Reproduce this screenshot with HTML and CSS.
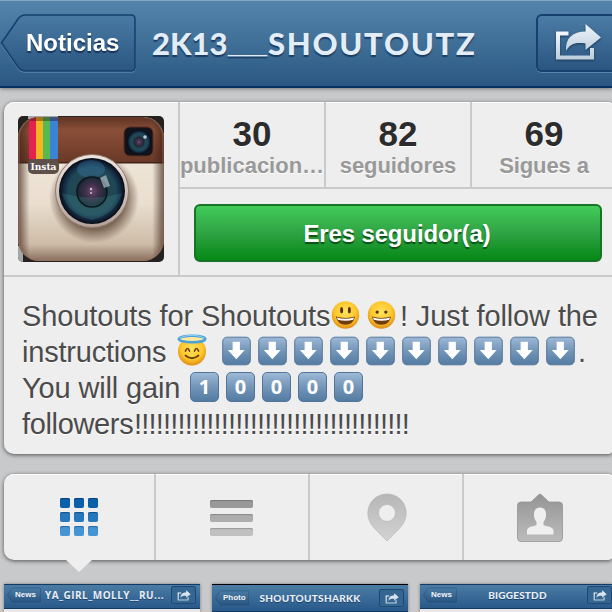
FILE: index.html
```html
<!DOCTYPE html>
<html lang="es">
<head>
<meta charset="utf-8">
<title>2K13__SHOUTOUTZ</title>
<link rel="stylesheet" href="styles.css">
</head>
<body>
<svg class="defs" aria-hidden="true">
  <defs>
    <linearGradient id="btn" x2="0" y2="1"><stop stop-color="#4a7ba5"/><stop offset="1" stop-color="#2a5680"/></linearGradient>
    <linearGradient id="silver" x2="0" y2="1"><stop stop-color="#f0f6fb"/><stop offset="1" stop-color="#bfcfde"/></linearGradient>
    <linearGradient id="key" x2="0" y2="1"><stop stop-color="#9db9d6"/><stop offset=".5" stop-color="#7395b8"/><stop offset="1" stop-color="#547ba2"/></linearGradient>
    <radialGradient id="face" cy=".4" r=".6"><stop stop-color="#ffe45e"/><stop offset=".65" stop-color="#fdc62b"/><stop offset="1" stop-color="#df8c13"/></radialGradient>
    <symbol id="back" viewBox="0 0 136 58"><path d="M1.500 29 18 5Q21 1 25 1H131Q135 1 135 5V53Q135 57 131 57H25Q21 57 18 53Z" fill="url(#btn)" stroke="#16406e" stroke-width="1.600"/></symbol>
    <symbol id="share" viewBox="0 0 48 38"><path d="M14.500 10.500H4V34.500H38V25" fill="none" stroke="url(#silver)" stroke-width="4"/><path d="M31.500 1 47 14.500 31.500 27V20.500C21 19 16 21 12 28 11 15 19 8.500 31.500 8.500Z" fill="url(#silver)"/></symbol>
    <symbol id="down" viewBox="0 0 30 30"><rect x=".7" y=".7" width="28.600" height="28.600" rx="4.500" fill="url(#key)" stroke="#52749a"/><path d="M11 5.500H18.500V14H23.500L14.800 23.500 6 14H11Z" fill="#fff"/></symbol>
    <symbol id="smile" viewBox="0 0 30 30"><circle cx="15" cy="15" r="14.200" fill="url(#face)"/><ellipse cx="11" cy="10" rx="1.500" ry="3.300" fill="#593310"/><ellipse cx="19" cy="10" rx="1.500" ry="3.300" fill="#593310"/><path d="M5 16.500Q15 19.500 25 16.500 23 25 15 25 7 25 5 16.500Z" fill="#713b12"/><path d="M6 17.500Q15 20 24 17.500L23 20Q15 22 7 20Z" fill="#fff"/></symbol>
    <symbol id="grin" viewBox="0 0 30 30"><circle cx="15" cy="15" r="14.200" fill="url(#face)"/><circle cx="10.500" cy="12" r="1.700" fill="#593310"/><circle cx="19.500" cy="12" r="1.700" fill="#593310"/><path d="M5 16.500Q15 19.500 25 16.500 23 25 15 25 7 25 5 16.500Z" fill="#713b12"/><path d="M6 17.500Q15 20 24 17.500L23 20Q15 22 7 20Z" fill="#fff"/></symbol>
    <symbol id="angel" viewBox="0 0 30 32"><circle cx="15" cy="17.500" r="14" fill="url(#face)"/><ellipse cx="15" cy="5" rx="13.200" ry="3.300" fill="#ffe9a0" stroke="#4aa2d9" stroke-width="2.600"/><path d="M2.500 4Q15-1.500 27.500 4" fill="none" stroke="#8fd2f2"/><path d="M8.500 17q2-5 4 0M17.500 17q2-5 4 0M8.500 21.500Q15 27 21.500 21.500" fill="none" stroke="#66400f" stroke-width="1.700" stroke-linecap="round"/></symbol>
  </defs>
</svg>

<header class="navbar">
  <a class="back"><svg class="back-shape"><use href="#back"/></svg><span class="back-label">Noticias</span></a>
  <h1 class="title"><span class="t1">2K13</span><span class="t2">__</span><span class="t3">SHOUTOUTZ</span></h1>
  <a class="share-btn"><svg class="share-icon"><use href="#share"/></svg></a>
</header>

<main>
  <section class="card profile">
    <div class="summary">
      <div class="avatar-cell">
        <svg class="avatar" viewBox="0 0 146 146">
          <defs>
            <linearGradient id="leather" x2="0" y2="1"><stop stop-color="#5b3022"/><stop offset=".3" stop-color="#8a4f38"/><stop offset="1" stop-color="#6a3827"/></linearGradient>
            <linearGradient id="body" x2="0" y2="1"><stop stop-color="#f4ece0"/><stop offset=".6" stop-color="#e9decf"/><stop offset=".88" stop-color="#cdbba6"/><stop offset="1" stop-color="#84695a"/></linearGradient>
            <linearGradient id="sides"><stop stop-color="#3a1f14" stop-opacity=".7"/><stop offset=".08" stop-color="#3a1f14" stop-opacity="0"/><stop offset=".92" stop-color="#3a1f14" stop-opacity="0"/><stop offset="1" stop-color="#3a1f14" stop-opacity=".7"/></linearGradient>
            <radialGradient id="glass"><stop stop-color="#6a4b70"/><stop offset=".2" stop-color="#42304c"/><stop offset=".42" stop-color="#1b2935"/><stop offset=".5" stop-color="#234650"/><stop offset=".72" stop-color="#1f4758"/><stop offset=".88" stop-color="#12253c"/><stop offset="1" stop-color="#060a12"/></radialGradient>
            <linearGradient id="ring" x2="0" y2="1"><stop stop-color="#eee6e0"/><stop offset="1" stop-color="#b3a198"/></linearGradient>
            <radialGradient id="shade"><stop offset=".7" stop-color="#5d4636" stop-opacity=".75"/><stop offset="1" stop-color="#5d4636" stop-opacity="0"/></radialGradient>
            <clipPath id="cam"><rect y="1" width="146" height="144" rx="21"/></clipPath>
          </defs>
          <rect width="146" height="146" fill="#25211f"/>
          <path d="M10 0H40V3H10ZM0 130H5V146H0Z" fill="#a6a7aa"/>
          <g clip-path="url(#cam)">
            <rect width="146" height="146" fill="url(#body)"/>
            <rect width="146" height="47" fill="url(#leather)"/>
            <rect y="46" width="146" height="1.500" fill="#40231a"/>
            <rect width="146" height="146" fill="url(#sides)"/>
            <path fill="#e3234e" d="M11 0h7v43h-7z"/><path fill="#f5b51f" d="M18 0h7v43h-7z"/><path fill="#58b950" d="M25 0h7v43h-7z"/><path fill="#3a83d5" d="M32 0h8v43h-8z"/>
            <path d="M11 0h29v5H11z" fill="#2b1510" opacity=".4"/>
            <rect y=".5" x="1" width="144" height="144" rx="21" fill="none" stroke="#9a7260" stroke-width="1.500" opacity=".5"/>
          </g>
          <circle cx="76" cy="82" r="45" fill="url(#shade)"/>
          <rect x="106" y="11" width="29" height="29" rx="6" fill="#11121a" stroke="#5a2e20"/>
          <circle cx="121" cy="26" r="12" fill="url(#glass)"/><circle cx="127" cy="21" r="1.800" fill="#bcd0df"/>
          <rect x="10" y="43" width="31" height="15" rx="5" fill="#5d504b"/>
          <text x="12.500" y="54" textLength="26" lengthAdjust="spacingAndGlyphs" class="insta">Insta</text>
          <circle cx="74" cy="75" r="36.500" fill="url(#ring)" stroke="#8f7a70"/>
          <circle cx="74" cy="75" r="33" fill="url(#glass)"/>
          <ellipse cx="73" cy="53" rx="14" ry="9" fill="#438ac1" opacity=".3"/>
          <path d="M44 77Q74 86 104 77Q98 98 74 104Q50 99 44 77" fill="#59b4ae" opacity=".18"/>
          <circle cx="74" cy="76" r="15" fill="none" stroke="#0b1620" stroke-width="1.500"/>
          <path d="M82 62 88 59 92 70 86 72Z" fill="#c6d5dc" opacity=".6"/>
          <circle cx="73" cy="73" r="1.200" fill="#d8c1dd"/><circle cx="73" cy="77" r="1" fill="#d8c1dd"/>
        </svg>
      </div>
      <div class="stats-col">
        <div class="stats">
          <div class="stat"><b class="num">30</b><span class="lbl lbl-a">publicacion…</span></div>
          <div class="stat"><b class="num">82</b><span class="lbl">seguidores</span></div>
          <div class="stat last"><b class="num">69</b><span class="lbl">Sigues a</span></div>
        </div>
        <div class="follow-row"><button class="follow">Eres seguidor(a)</button></div>
      </div>
    </div>
    <div class="bio">
      <div class="line"><span class="b1">Shoutouts for Shoutouts</span><svg class="emo"><use href="#smile"/></svg><svg class="emo"><use href="#grin"/></svg><span class="b2">! Just follow the</span></div>
      <div class="line"><span class="b3">instructions</span><svg class="emo angel"><use href="#angel"/></svg><svg class="emo"><use href="#down"/></svg><svg class="emo"><use href="#down"/></svg><svg class="emo"><use href="#down"/></svg><svg class="emo"><use href="#down"/></svg><svg class="emo"><use href="#down"/></svg><svg class="emo"><use href="#down"/></svg><svg class="emo"><use href="#down"/></svg><svg class="emo"><use href="#down"/></svg><svg class="emo"><use href="#down"/></svg><svg class="emo"><use href="#down"/></svg><span class="dot">.</span></div>
      <div class="line"><span class="b4">You will gain</span><span class="key">1</span><span class="key">0</span><span class="key">0</span><span class="key">0</span><span class="key">0</span></div>
      <div class="line"><span class="b5">followers</span><span class="b6">!!!!!!!!!!!!!!!!!!!!!!!!!!!!!!!!!!!!!!</span></div>
    </div>
  </section>

  <nav class="card tabs">
    <div class="tab active"><div class="grid"><i class="r1"></i><i class="r1"></i><i class="r1"></i><i class="r2"></i><i class="r2"></i><i class="r2"></i><i class="r3"></i><i class="r3"></i><i class="r3"></i></div></div>
    <div class="tab"><div class="list"><i class="l1"></i><i class="l2"></i><i class="l3"></i></div></div>
    <div class="tab"><svg class="pin" viewBox="0 0 40 49"><defs><linearGradient id="pg" x2="0" y2="1"><stop stop-color="#b6b6b6"/><stop offset="1" stop-color="#d3d3d3"/></linearGradient></defs><path fill="url(#pg)" stroke="#b4b4b4" stroke-width=".7" fill-rule="evenodd" d="M20 1C9 1 .8 9.500.8 20.500.8 32 12 39 20 48 28 39 39.200 32 39.200 20.500 39.200 9.500 31 1 20 1ZM20 11.500A8.500 8.500 0 1 1 20 28.500 8.500 8.500 0 1 1 20 11.500Z"/></svg></div>
    <div class="tab"><svg class="person" viewBox="0 0 46 49"><defs><linearGradient id="ug" x2="0" y2="1"><stop stop-color="#949494"/><stop offset="1" stop-color="#bcbcbc"/></linearGradient></defs><path fill="url(#ug)" stroke="#8d8d8d" stroke-width=".7" d="M4 9H14L22 1.500Q23 .5 24 1.500L32 9H42Q45.500 9 45.500 12.500V45Q45.500 48.500 42 48.500H4Q.5 48.500.5 45V12.500Q.5 9 4 9Z"/><path fill="#efefef" d="M23 14.500C18.500 14.500 16.500 18 17 23 17.300 26 18.500 27.500 19.500 29V32C15 34 10 33.500 10 38V41.500H36.500V38C36.500 33.500 31 34 26.500 32V29C27.500 27.500 28.700 26 29 23 29.500 18 27.500 14.500 23 14.500Z"/></svg></div>
  </nav>

  <section class="thumbs">
    <article class="thumb"><div class="mini"><span class="mback"><svg class="mshape"><use href="#back"/></svg><span class="mlabel">News</span></span><span class="mtitle m1">YA_GIRL_MOLLY__RU...</span><span class="mshare"><svg class="micon"><use href="#share"/></svg></span></div></article>
    <article class="thumb low"><div class="mini"><span class="mback"><svg class="mshape"><use href="#back"/></svg><span class="mlabel">Photo</span></span><span class="mtitle m2">SHOUTOUTSHARKK</span><span class="mshare"><svg class="micon"><use href="#share"/></svg></span></div></article>
    <article class="thumb cut"><div class="mini"><span class="mback"><svg class="mshape"><use href="#back"/></svg><span class="mlabel">News</span></span><span class="mtitle m3">BIGGESTDD</span><span class="mshare"><svg class="micon"><use href="#share"/></svg></span></div></article>
  </section>
</main>
</body>
</html>
```
FILE: styles.css
```css
* { box-sizing: border-box; }
html { overflow: hidden; }
body {
  margin: 0;
  width: 612px;
  height: 612px;
  overflow: hidden;
  background: #c8c9cb;
  font-family: "Liberation Sans", Arial, sans-serif;
}
.defs { display: block; width: 0; height: 0; }

/* navigation bar */
.navbar {
  display: flex;
  align-items: flex-start;
  height: 88px;
  padding-top: 13px;
  background: linear-gradient(#5484ab, #2a5883);
  border-top: 1px solid #80a6c4;
  border-bottom: 2px solid #063060;
  box-shadow: 0 1px 4px rgba(0, 0, 0, .4);
}
.back { display: grid; flex: none; width: 136px; height: 58px; filter: drop-shadow(0 1px 0 rgba(130, 170, 205, .5)); }
.back-shape { grid-area: 1 / 1; width: 136px; height: 58px; }
.back-label {
  grid-area: 1 / 1;
  width: 93px;
  margin: 14px 0 0 26px;
  font: bold 24px/30px "Liberation Sans", sans-serif;
  color: #fff;
  text-shadow: 0 2px 1px rgba(10, 35, 70, .75);
  white-space: nowrap;
}
.title {
  flex: none;
  display: flex;
  width: 384px;
  margin: 0;
  padding-left: 16px;
  font: 900 31px/58px Lato, "Open Sans", sans-serif;
  color: #e3edf7;
  text-shadow: 0 2px 1px rgba(15, 40, 75, .7);
  white-space: nowrap;
}
.t1 { flex: none; width: 76px; }
.t2 { flex: none; width: 40px; font: bold 35px/52px "Liberation Sans", sans-serif; }
.t3 { flex: none; letter-spacing: 1.7px; }
.share-btn {
  flex: none;
  width: 76px;
  height: 58px;
  padding: 7px 0 0 17px;
  margin-left: 16px;
  border: 2px solid #16406e;
  border-right: 0;
  border-radius: 6px 0 0 6px;
  background: linear-gradient(#4b7ca6, #2a5680);
  box-shadow: 0 1px 0 rgba(130, 170, 205, .5);
}
.share-icon { display: block; width: 48px; height: 38px; margin-left: -1px; filter: drop-shadow(0 1px 1px #163757); }

/* cards, running off the right edge */
.card {
  width: 608px;
  margin-left: 4px;
  background: #eee;
  border-radius: 10px 6px 6px 10px / 10px 2px 2px 10px;
  box-shadow: 0 1px 4px rgba(0, 0, 0, .6), inset 0 1px 0 #fff;
}
.profile { margin-top: 14px; height: 352px; }
.summary { display: flex; height: 175px; border-bottom: 2px solid #cacaca; }
.avatar-cell { flex: none; width: 176px; padding: 14px; border-right: 2px solid #cacaca; }
.avatar { display: block; width: 146px; height: 146px; border-radius: 5px; }
.insta { font: bold 10px "DejaVu Serif", serif; fill: #fff; }
.stats-col { flex: 1; }
.stats { display: flex; height: 87px; border-bottom: 2px solid #cacaca; }
.stat { flex: none; display: flex; flex-direction: column; align-items: center; width: 146px; padding-top: 13px; border-right: 2px solid #cacaca; }
.last { width: 140px; padding-left: 4px; border-right: 0; }
.num { font-size: 35px; line-height: 38px; letter-spacing: .1px; color: #2c2c2c; text-shadow: 0 1px 0 #fff; }
.lbl { font-size: 22px; line-height: 26px; font-weight: bold; letter-spacing: -.1px; color: #999; white-space: nowrap; text-shadow: 0 1px 0 #fff; }
.lbl-a { letter-spacing: 0; }
.follow-row { padding: 15px 14px; }
.follow {
  display: block;
  width: 408px;
  height: 58px;
  padding: 2px 2px 0 0;
  border: 2px solid #177426;
  border-radius: 6px;
  background: linear-gradient(#42cb5a, #2fa344 50%, #058915);
  color: #fff;
  font: bold 24px "Liberation Sans", sans-serif;
  letter-spacing: -.15px;
  text-shadow: 0 2px 1px rgba(0, 50, 10, .7);
}

/* biography */
.bio { padding: 21px 0 0 18px; color: #4b4b4b; font-size: 29px; line-height: 36px; letter-spacing: -.12px; text-shadow: 0 1px 0 #fff; }
.line { display: flex; height: 36px; white-space: nowrap; }
.line > * { flex: none; }
.emo { width: 29px; height: 30px; margin: 2px 7px 0 0; }
.b1 { width: 309px; }
.b2 { margin-left: -3px; }
.b3 { width: 155px; letter-spacing: -.2px; }
.angel { width: 30px; height: 32px; margin: 0 15px 0 0; }
.dot { margin-left: -4px; }
.b4 { width: 168px; letter-spacing: -.15px; }
.b5 { width: 112px; letter-spacing: -.35px; }
.b6 { letter-spacing: -.82px; }
.key {
  width: 29px;
  height: 30px;
  margin: 2px 7px 0 0;
  border: 1px solid #52749a;
  border-radius: 5px;
  background: linear-gradient(#9db9d6, #7395b8 50%, #547ba2);
  color: #fff;
  font: bold 20px/27px "Open Sans", sans-serif;
  letter-spacing: 0;
  text-align: center;
  text-shadow: none;
}

/* view switcher */
.tabs { display: flex; height: 86px; margin-top: 20px; }
.tab { flex: none; position: relative; display: flex; justify-content: center; width: 154px; border-right: 2px solid #cacaca; }
.tab:first-child { width: 152px; }
.tab:last-child { width: 148px; padding-left: 4px; border-right: 0; }
.active::after {
  content: "";
  position: absolute;
  left: 62px;
  top: 86px;
  width: 26px;
  height: 12px;
  background: #eee;
  clip-path: polygon(0 0, 100% 0, 50% 100%);
}
.grid { display: grid; grid-template-columns: repeat(3, 10px); grid-auto-rows: 10px; gap: 4px; margin-top: 24px; }
.grid i { border-radius: 2px; }
.r1 { background: #0b60aa; box-shadow: inset 0 1px 1px #06407a; }
.r2 { background: #2777bd; box-shadow: inset 0 1px 1px #15528a; }
.r3 { background: #4595d5; box-shadow: inset 0 1px 1px #2767a0; }
.list { display: flex; flex-direction: column; gap: 6px; width: 43px; margin: 26px 1px 0 0; }
.list i { height: 8px; border-radius: 2px; }
.l1 { background: #999; box-shadow: inset 0 1px 1px #777; }
.l2 { background: #adadad; box-shadow: inset 0 1px 1px #888; }
.l3 { background: #c0c0c0; box-shadow: inset 0 1px 1px #999; }
.pin { width: 40px; height: 49px; margin: 19px 0 0 1px; }
.person { width: 46px; height: 49px; margin: 19px 0 0 0; }

/* photo grid */
.thumbs { display: flex; gap: 12px; width: 608px; margin: 24px 0 0 4px; }
.thumb { flex: none; width: 196px; height: 28px; background: #e8e8ea; box-shadow: 0 0 3px rgba(0, 0, 0, .4); }
.cut { width: 192px; }
.mini { display: flex; align-items: flex-start; height: 25px; padding: 1px 0 0 3px; border-top: 1px solid #153a61; border-bottom: 1px solid #153a61; background: linear-gradient(#4b7ca5, #29598a); }
.low .mini { height: 28px; padding-top: 4px; border-top-color: #000; }
.mback { display: grid; flex: none; width: 34px; height: 18px; }
.mshape { grid-area: 1 / 1; width: 34px; height: 18px; }
.mlabel { grid-area: 1 / 1; padding-left: 8px; font: bold 8px/18px "Liberation Sans", sans-serif; color: #f0f4f8; }
.mtitle { flex: 1; text-align: center; font: 900 10px/18px Lato, "Open Sans", sans-serif; color: #e7eff7; white-space: nowrap; text-shadow: 0 1px 0 #1c4168; }
.m1 { margin-left: -3px; font: bold 10px/18px "Open Sans", sans-serif; letter-spacing: .45px; }
.m2 { letter-spacing: .3px; margin-left: -8px; }
.m3 { margin-left: -9px; letter-spacing: .2px; }
.mshare { flex: none; width: 25px; height: 18px; margin-right: 4px; padding: 3px 5px; border: 1px solid #1d4874; border-radius: 2px; background: #356692; }
.cut .mshare { margin-right: 0; }
.micon { display: block; width: 14px; height: 11px; }
```
